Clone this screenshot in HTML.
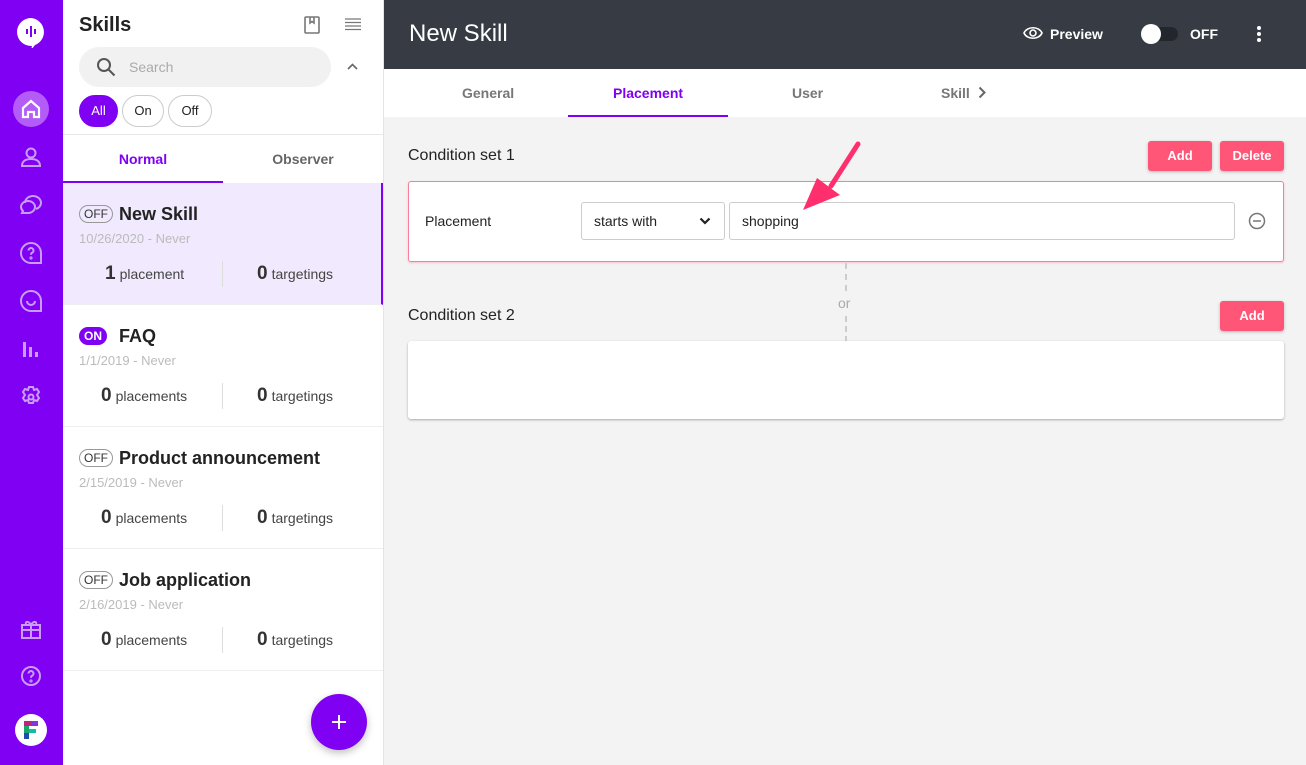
<!DOCTYPE html>
<html><head><meta charset="utf-8"><style>
*{box-sizing:border-box;margin:0;padding:0}
body{width:1306px;height:765px;overflow:hidden;font-family:"Liberation Sans",sans-serif;background:#f3f3f3;position:relative;color:#222}
.abs{position:absolute}
.rail{left:0;top:0;width:63px;height:765px;background:#7f00f2}
.list{left:63px;top:0;width:321px;height:765px;background:#fff;border-right:1px solid #e4e4e4}
.ic{position:absolute;left:19px;width:24px;height:24px}
.pill{position:absolute;top:95px;height:32px;border:1px solid #ccc;border-radius:16px;font-size:13px;line-height:30px;text-align:center;color:#222}
.item{position:absolute;left:0;width:320px;height:122px;border-bottom:1px solid #eee}
.badge{position:absolute;left:16px;top:22px;height:18px;border:1px solid #999;border-radius:9px;font-size:12px;line-height:16px;padding:0 4px;color:#333}
.title{position:absolute;left:56px;top:21px;font-size:18px;font-weight:bold;color:#222}
.date{position:absolute;left:16px;top:48px;font-size:13px;color:#bbb}
.st{position:absolute;top:80px;font-size:14px;color:#444}
.st b{font-size:19px;margin-right:4px;color:#333}
.sep{position:absolute;left:159px;top:78px;width:1px;height:26px;background:#ddd}
.btn{position:absolute;height:30px;background:#ff5577;color:#fff;font-weight:bold;font-size:13px;line-height:30px;text-align:center;border-radius:3px;box-shadow:0 1px 3px rgba(0,0,0,.25)}
</style></head><body>
<div class="abs rail">
 <svg class="ic" style="top:16px;left:15px;width:32px;height:32px" viewBox="0 0 32 32"><path d="M16 2a14 14 0 1 0 0 28l1 0 -1 4 4-5A14 14 0 0 0 16 2z" fill="#fff"/><rect x="11" y="13" width="2" height="5" fill="#7f00f2"/><rect x="15" y="10" width="2" height="11" fill="#7f00f2"/><rect x="19" y="13" width="2" height="5" fill="#7f00f2"/></svg>
 <div class="abs" style="left:13px;top:91px;width:36px;height:36px;border-radius:18px;background:#b35cf7"></div>
 <svg class="ic" style="top:97px" viewBox="0 0 24 24" fill="none" stroke="#fff" stroke-width="2.2"><path d="M4 11L12 4l8 7v9h-5v-5h-6v5H4z"/></svg>
 <svg class="ic" style="top:145px" viewBox="0 0 24 24" fill="none" stroke="#c99cf7" stroke-width="2"><circle cx="12" cy="8" r="4.5"/><path d="M3 21c0-5 4-7 9-7s9 2 9 7z"/></svg>
 <svg class="ic" style="top:193px" viewBox="0 0 24 24" fill="none" stroke="#c99cf7" stroke-width="2"><path d="M6 10a8 7 0 0 1 16 0a8 7 0 0 1-5 6"/><path d="M2 14a7 6 0 0 1 14 0a7 6 0 0 1-7 6H3l1-2a6 6 0 0 1-2-4z"/></svg>
 <svg class="ic" style="top:241px" viewBox="0 0 24 24" fill="none" stroke="#c99cf7" stroke-width="2"><path d="M12 22a10 10 0 1 1 10-10v10z"/><path d="M9.5 9.5a2.5 2.5 0 1 1 3.5 2.3c-1 .5-1 1-1 2"/><circle cx="12" cy="17" r=".6"/></svg>
 <svg class="ic" style="top:289px" viewBox="0 0 24 24" fill="none" stroke="#c99cf7" stroke-width="2"><path d="M12 22a10 10 0 1 1 10-10v10z"/><path d="M8 12a4 4 0 0 0 8 0"/></svg>
 <svg class="ic" style="top:337px" viewBox="0 0 24 24" fill="#c99cf7"><rect x="4" y="5" width="3" height="15"/><rect x="10" y="10" width="3" height="10"/><rect x="16" y="15" width="3" height="5"/></svg>
 <svg class="ic" style="top:385px" viewBox="0 0 24 24" fill="none" stroke="#c99cf7" stroke-width="2"><path d="M10 2h4l1 3 3-1 2 3-2 3 2 3-2 3-3-1-1 3h-4l-1-3-3 1-2-3 2-3-2-3 2-3 3 1z"/><circle cx="12" cy="12" r="2.5"/></svg>
 <svg class="ic" style="top:617px" viewBox="0 0 24 24" fill="none" stroke="#c99cf7" stroke-width="2"><rect x="3" y="8" width="18" height="13"/><path d="M3 13h18M12 8v13M12 8c-2-4-6-4-5-1M12 8c2-4 6-4 5-1"/></svg>
 <svg class="ic" style="top:664px" viewBox="0 0 24 24" fill="none" stroke="#c99cf7" stroke-width="2"><circle cx="12" cy="12" r="9"/><path d="M9.5 9.5a2.5 2.5 0 1 1 3.5 2.3c-1 .5-1 1-1 2"/><circle cx="12" cy="17" r=".6"/></svg>
 <div class="abs" style="left:15px;top:714px;width:32px;height:32px;border-radius:16px;background:#fff"></div>
 <svg class="abs" style="left:24px;top:721px" width="14" height="18" viewBox="0 0 14 18"><path d="M0 0h14v5H5v3h7v4H5v6H0z" fill="#1aa86a"/><path d="M0 0h7v5H0z" fill="#c0247d"/><path d="M7 0h7v5H7z" fill="#7d3ad8"/><path d="M0 12h5v6H0z" fill="#1f4fa8"/><path d="M5 8h7v4H5z" fill="#0fc0a0"/></svg>
</div>

<div class="abs list">
 <div class="abs" style="left:16px;top:14px;font-size:20px;font-weight:bold;color:#222">Skills</div>
 <svg class="abs" style="left:241px;top:16px" width="16" height="18" viewBox="0 0 16 18" fill="none" stroke="#777" stroke-width="1.6"><rect x="1" y="1" width="14" height="16" rx="1"/><path d="M6 1v6l2-1.5 2 1.5V1"/></svg>
 <svg class="abs" style="left:282px;top:18px" width="16" height="13" viewBox="0 0 16 13" stroke="#777" stroke-width="1.3"><path d="M0 1h16M0 4.5h16M0 8h16M0 11.5h16"/></svg>
 <div class="abs" style="left:16px;top:47px;width:252px;height:40px;border-radius:20px;background:#f1f1f1"></div>
 <svg class="abs" style="left:33px;top:57px" width="20" height="20" viewBox="0 0 20 20" fill="none" stroke="#555" stroke-width="2"><circle cx="8" cy="8" r="6"/><path d="M12.5 12.5l6 6"/></svg>
 <div class="abs" style="left:66px;top:59px;font-size:14px;color:#aaa">Search</div>
 <svg class="abs" style="left:284px;top:63px" width="11" height="7" viewBox="0 0 11 7" fill="none" stroke="#666" stroke-width="1.6"><path d="M1 6l4.5-4.5L10 6"/></svg>
 <div class="pill" style="left:16px;width:39px;background:#7f00f2;border-color:#7f00f2;color:#fff">All</div>
 <div class="pill" style="left:59px;width:42px">On</div>
 <div class="pill" style="left:105px;width:44px">Off</div>
 <div class="abs" style="left:0;top:134px;width:320px;height:1px;background:#e8e8e8"></div>
 <div class="abs" style="left:0;top:151px;width:160px;text-align:center;font-size:14px;font-weight:bold;color:#7f00f2">Normal</div>
 <div class="abs" style="left:160px;top:151px;width:160px;text-align:center;font-size:14px;font-weight:bold;color:#666">Observer</div>
 <div class="abs" style="left:0;top:181px;width:160px;height:2px;background:#7f00f2"></div>

 <div class="item" style="top:183px;background:#f1e9fd;border-right:2px solid #7f00f2">
  <div class="badge">OFF</div><div class="title">New Skill</div><div class="date">10/26/2020 - Never</div>
  <div class="st" style="left:42px"><b>1</b>placement</div><div class="sep"></div><div class="st" style="left:194px"><b>0</b>targetings</div>
 </div>
 <div class="item" style="top:305px">
  <div class="badge" style="background:#7f00f2;border-color:#7f00f2;color:#fff;font-weight:bold">ON</div><div class="title">FAQ</div><div class="date">1/1/2019 - Never</div>
  <div class="st" style="left:38px"><b>0</b>placements</div><div class="sep"></div><div class="st" style="left:194px"><b>0</b>targetings</div>
 </div>
 <div class="item" style="top:427px">
  <div class="badge">OFF</div><div class="title">Product announcement</div><div class="date">2/15/2019 - Never</div>
  <div class="st" style="left:38px"><b>0</b>placements</div><div class="sep"></div><div class="st" style="left:194px"><b>0</b>targetings</div>
 </div>
 <div class="item" style="top:549px">
  <div class="badge">OFF</div><div class="title">Job application</div><div class="date">2/16/2019 - Never</div>
  <div class="st" style="left:38px"><b>0</b>placements</div><div class="sep"></div><div class="st" style="left:194px"><b>0</b>targetings</div>
 </div>
 <div class="abs" style="left:248px;top:694px;width:56px;height:56px;border-radius:28px;background:#7f00f2;box-shadow:0 3px 8px rgba(0,0,0,.25)"></div>
 <svg class="abs" style="left:268px;top:714px" width="16" height="16" viewBox="0 0 16 16" stroke="#fff" stroke-width="2"><path d="M8 1v14M1 8h14"/></svg>
</div>

<div class="abs" style="left:384px;top:0;width:922px;height:69px;background:#363b44"></div>
<div class="abs" style="left:409px;top:20px;font-size:24px;color:#fff">New Skill</div>
<svg class="abs" style="left:1023px;top:26px" width="20" height="14" viewBox="0 0 20 14" fill="none" stroke="#fff" stroke-width="1.6"><path d="M1 7c3-7 15-7 18 0c-3 7-15 7-18 0z"/><circle cx="10" cy="7" r="3"/></svg>
<div class="abs" style="left:1050px;top:26px;font-size:14px;font-weight:bold;color:#fff">Preview</div>
<div class="abs" style="left:1146px;top:27px;width:32px;height:14px;border-radius:7px;background:#23262c"></div>
<div class="abs" style="left:1141px;top:24px;width:20px;height:20px;border-radius:10px;background:#fff"></div>
<div class="abs" style="left:1190px;top:26px;font-size:14px;font-weight:bold;color:#fff">OFF</div>
<svg class="abs" style="left:1256px;top:25px" width="6" height="18" viewBox="0 0 6 18" fill="#fff"><circle cx="3" cy="3" r="2"/><circle cx="3" cy="9" r="2"/><circle cx="3" cy="15" r="2"/></svg>

<div class="abs" style="left:384px;top:69px;width:922px;height:48px;background:#fff"></div>
<div class="abs" style="left:462px;top:85px;font-size:14px;font-weight:bold;color:#777">General</div>
<div class="abs" style="left:613px;top:85px;font-size:14px;font-weight:bold;color:#7f00f2">Placement</div>
<div class="abs" style="left:792px;top:85px;font-size:14px;font-weight:bold;color:#777">User</div>
<div class="abs" style="left:941px;top:85px;font-size:14px;font-weight:bold;color:#777">Skill</div>
<svg class="abs" style="left:978px;top:86px" width="8" height="13" viewBox="0 0 8 13" fill="none" stroke="#666" stroke-width="2"><path d="M1.5 1.5l5 5-5 5"/></svg>
<div class="abs" style="left:568px;top:115px;width:160px;height:2px;background:#7f00f2"></div>

<div class="abs" style="left:408px;top:147px;font-size:16px;color:#222">Condition set 1</div>
<div class="btn" style="left:1148px;top:141px;width:64px">Add</div>
<div class="btn" style="left:1220px;top:141px;width:64px">Delete</div>
<div class="abs" style="left:408px;top:181px;width:876px;height:81px;background:#fff;border:1px solid #f5809c;border-radius:3px;box-shadow:0 1px 2px rgba(255,80,120,.3)"></div>
<div class="abs" style="left:425px;top:213px;font-size:14px;color:#222">Placement</div>
<div class="abs" style="left:581px;top:202px;width:144px;height:38px;border:1px solid #ccc;border-radius:3px;background:#fff"></div>
<div class="abs" style="left:594px;top:213px;font-size:14px;color:#222">starts with</div>
<svg class="abs" style="left:699px;top:217px" width="12" height="8" viewBox="0 0 12 8" fill="none" stroke="#222" stroke-width="2.2"><path d="M1.5 1.5l4.5 4.5 4.5-4.5"/></svg>
<div class="abs" style="left:729px;top:202px;width:506px;height:38px;border:1px solid #ccc;border-radius:3px;background:#fff"></div>
<div class="abs" style="left:742px;top:213px;font-size:14px;color:#222">shopping</div>
<svg class="abs" style="left:1248px;top:212px" width="18" height="18" viewBox="0 0 18 18" fill="none" stroke="#777" stroke-width="1.5"><circle cx="9" cy="9" r="7.5"/><path d="M5 9h8"/></svg>
<svg class="abs" style="left:795px;top:140px" width="70" height="75" viewBox="0 0 70 75"><path d="M63 4L36 46" stroke="#ff2f6d" stroke-width="5" stroke-linecap="round"/><path d="M8 70L22 38L45 55z" fill="#ff2f6d"/></svg>

<div class="abs" style="left:845px;top:263px;width:0;height:28px;border-left:2px dashed #ccc"></div>
<div class="abs" style="left:838px;top:295px;font-size:14px;color:#aaa">or</div>
<div class="abs" style="left:845px;top:316px;width:0;height:26px;border-left:2px dashed #ccc"></div>

<div class="abs" style="left:408px;top:307px;font-size:16px;color:#222">Condition set 2</div>
<div class="btn" style="left:1220px;top:301px;width:64px">Add</div>
<div class="abs" style="left:408px;top:341px;width:876px;height:78px;background:#fff;border-radius:3px;box-shadow:0 1px 2px rgba(0,0,0,.3)"></div>
</body></html>
